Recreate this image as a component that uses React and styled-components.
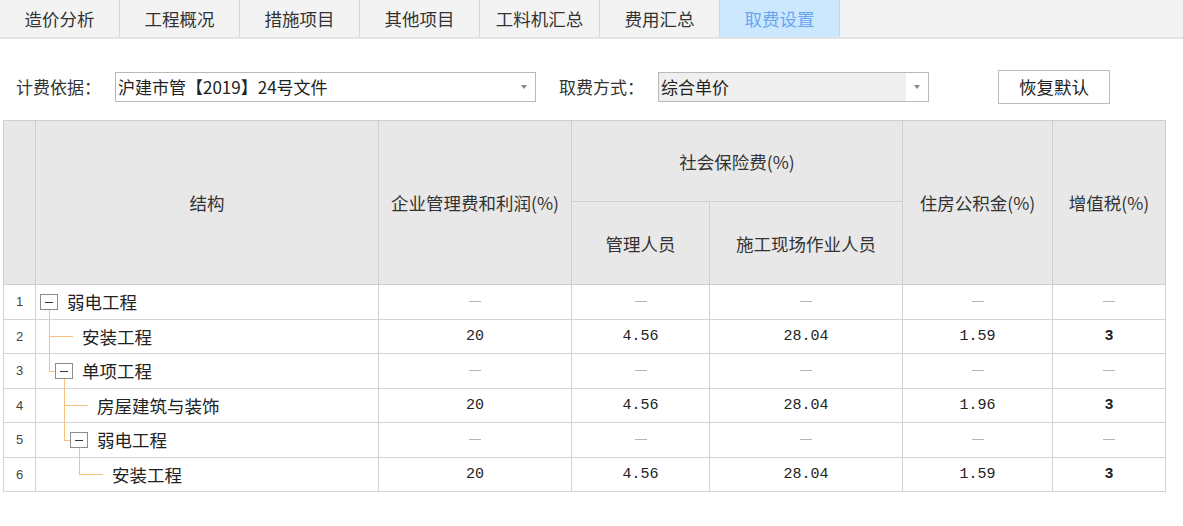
import React from 'react';
import styled, { createGlobalStyle } from 'styled-components';

const GlobalStyle = createGlobalStyle`
  html, body {
    margin: 0;
    padding: 0;
    background: #fff;
  }
  body {
    font-family: "Noto Sans CJK SC", "Noto Sans", sans-serif;
    color: #333;
  }
`;

const Page = styled.div`
  width: 1183px;
  height: 526px;
  display: flex;
  flex-direction: column;
  overflow: hidden;
`;

const TabBar = styled.div`
  display: flex;
  height: 37px;
  background: #f3f3f3;
  border-bottom: 2px solid #e3e3e3;
`;

const Tab = styled.div`
  width: 119px;
  display: flex;
  align-items: center;
  justify-content: center;
  font-size: 17.5px;
  border-right: 1px solid #d6d6d6;
  background: ${(p) => (p.$active ? '#cce8ff' : 'transparent')};
  color: ${(p) => (p.$active ? '#6aa6f0' : '#333')};
`;

const Toolbar = styled.div`
  display: flex;
  align-items: center;
  height: 67px;
  padding: 14px 0 0 16px;
`;

const Label = styled.span`
  font-size: 17px;
  color: #333;
  margin-right: ${(p) => p.$gap}px;
`;

const Select = styled.div`
  display: flex;
  align-items: stretch;
  width: ${(p) => p.$w}px;
  height: 30px;
  box-sizing: border-box;
  border: 1px solid #b9b9b9;
  background: ${(p) => (p.$gray ? '#efefef' : '#fff')};
  margin-right: ${(p) => p.$mr}px;
`;

const SelectText = styled.div`
  flex: 1;
  display: flex;
  align-items: center;
  padding-left: 2px;
  font-size: 17px;
  color: #222;
  white-space: nowrap;
`;

const Arrow = styled.div`
  width: 22px;
  background: #fff;
  display: flex;
  align-items: center;
  justify-content: center;
  &::after {
    content: '';
    border-left: 3.5px solid transparent;
    border-right: 3.5px solid transparent;
    border-top: 4px solid #888;
  }
`;

const Button = styled.button`
  width: 112px;
  height: 34px;
  box-sizing: border-box;
  border: 1px solid #bdbdbd;
  background: #fff;
  font-family: inherit;
  font-size: 17.5px;
  color: #222;
  padding: 0;
`;

const Table = styled.table`
  margin-left: 3px;
  width: 1163px;
  border-collapse: collapse;
  table-layout: fixed;
  border: 1px solid #cfcfcf;
`;

const Th = styled.th`
  background: #e8e8e8;
  border: 1px solid #cfcfcf;
  font-weight: normal;
  font-size: 17.5px;
  color: #333;
  padding: 0;
  height: ${(p) => p.$h || 'auto'};
`;

const Td = styled.td`
  border: 1px solid #d3d3d3;
  height: 33.5px;
  padding: 0;
  text-align: center;
  font-family: "Liberation Mono", "DejaVu Sans Mono", monospace;
  font-size: 15px;
  font-weight: ${(p) => (p.$bold ? 'bold' : 'normal')};
  color: #222;
`;

const NumCell = styled(Td)`
  font-family: "Liberation Sans", sans-serif;
  font-size: 13px;
  color: #444;
`;

const Dash = styled.span`
  display: inline-block;
  width: 12px;
  height: 1px;
  background: #b5b5b5;
  vertical-align: middle;
`;

const TreeCell = styled.td`
  position: relative;
  border: 1px solid #d3d3d3;
  padding: 0 0 0 ${(p) => p.$indent}px;
  text-align: left;
  font-size: 17.5px;
  color: #222;
`;

const Guide = styled.span`
  position: absolute;
  background: #f6c27a;
`;

const ExpandBox = styled.span`
  position: absolute;
  top: 50%;
  margin-top: -8px;
  width: 18px;
  height: 16px;
  box-sizing: border-box;
  border: 1px solid #8c8c8c;
  background: #fff;
  &::after {
    content: '';
    position: absolute;
    left: 4px;
    right: 4px;
    top: 7px;
    height: 1px;
    background: #333;
  }
`;

const rows = [
  { name: '弱电工程', level: 0, box: true, through: false, vals: null },
  { name: '安装工程', level: 1, box: false, through: true, vals: ['20', '4.56', '28.04', '1.59', '3'] },
  { name: '单项工程', level: 1, box: true, through: false, vals: null },
  { name: '房屋建筑与装饰', level: 2, box: false, through: true, vals: ['20', '4.56', '28.04', '1.96', '3'] },
  { name: '弱电工程', level: 2, box: true, through: false, vals: null },
  { name: '安装工程', level: 3, box: false, through: false, vals: ['20', '4.56', '28.04', '1.59', '3'] },
];

function TreeGuides({ level, box, through }) {
  const boxLeft = 4 + 15 * level;
  const center = boxLeft + 9;
  const parent = center - 15;
  return (
    <>
      {level > 0 && (
        <>
          <Guide style={{ left: parent, width: 1, top: 0, height: through ? '100%' : '50%' }} />
          <Guide style={{ left: parent, top: '50%', height: 1, width: box ? boxLeft - parent : 24 }} />
        </>
      )}
      {box && (
        <>
          <ExpandBox style={{ left: boxLeft }} />
          <Guide style={{ left: center, width: 1, top: 'calc(50% + 8px)', bottom: 0 }} />
        </>
      )}
    </>
  );
}

const tabs = ['造价分析', '工程概况', '措施项目', '其他项目', '工料机汇总', '费用汇总', '取费设置'];

export default function App() {
  return (
    <Page>
      <GlobalStyle />
      <TabBar>
        {tabs.map((t) => (
          <Tab key={t} $active={t === '取费设置'}>{t}</Tab>
        ))}
      </TabBar>
      <Toolbar>
        <Label $gap={14}>计费依据：</Label>
        <Select $w={421} $mr={23}>
          <SelectText>沪建市管【2019】24号文件</SelectText>
          <Arrow />
        </Select>
        <Label $gap={14}>取费方式：</Label>
        <Select $w={271} $mr={69} $gray>
          <SelectText>综合单价</SelectText>
          <Arrow />
        </Select>
        <Button>恢复默认</Button>
      </Toolbar>
      <Table>
        <colgroup>
          <col style={{ width: 32 }} />
          <col style={{ width: 343 }} />
          <col style={{ width: 193 }} />
          <col style={{ width: 138 }} />
          <col style={{ width: 193 }} />
          <col style={{ width: 150 }} />
          <col style={{ width: 113 }} />
        </colgroup>
        <thead>
          <tr>
            <Th rowSpan={2} />
            <Th rowSpan={2}>结构</Th>
            <Th rowSpan={2}>企业管理费和利润(%)</Th>
            <Th colSpan={2} $h="80px">社会保险费(%)</Th>
            <Th rowSpan={2}>住房公积金(%)</Th>
            <Th rowSpan={2}>增值税(%)</Th>
          </tr>
          <tr>
            <Th $h="82px">管理人员</Th>
            <Th $h="82px">施工现场作业人员</Th>
          </tr>
        </thead>
        <tbody>
          {rows.map((r, i) => (
            <tr key={i}>
              <NumCell>{i + 1}</NumCell>
              <TreeCell $indent={31 + 15 * r.level}>
                <TreeGuides level={r.level} box={r.box} through={r.through} />
                {r.name}
              </TreeCell>
              {r.vals
                ? r.vals.map((v, j) => (
                    <Td key={j} $bold={j === 4}>{v}</Td>
                  ))
                : [0, 1, 2, 3, 4].map((j) => (
                    <Td key={j}><Dash /></Td>
                  ))}
            </tr>
          ))}
        </tbody>
      </Table>
    </Page>
  );
}
